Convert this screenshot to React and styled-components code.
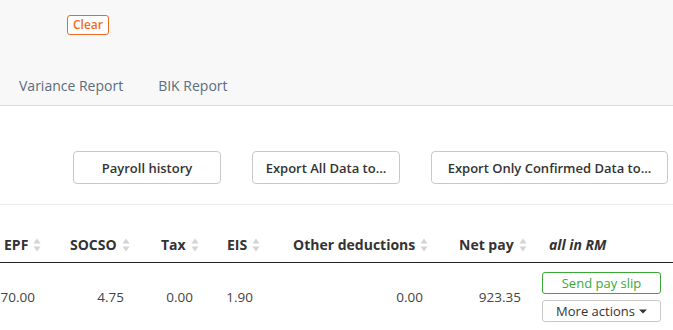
import React from 'react';
import styled, { createGlobalStyle } from 'styled-components';

const GlobalStyle = createGlobalStyle`
  html, body {
    margin: 0;
    padding: 0;
    background: #fff;
    font-family: "Open Sans", "Noto Sans", sans-serif;
    color: #333;
  }
  * { box-sizing: border-box; }
`;

const Page = styled.div`
  width: 673px;
  height: 330px;
  overflow: hidden;
`;

const TopPanel = styled.div`
  height: 106px;
  background: #f8f8f8;
  border-bottom: 1px solid #dcdcdc;
  display: flex;
  flex-direction: column;
`;

const ClearRow = styled.div`
  padding: 12px 0 0 67px;
`;

const ClearButton = styled.button`
  height: 20px;
  padding: 0 5px;
  border: 1px solid #f26a22;
  border-radius: 3px;
  background: #fff;
  color: #f26a22;
  font-family: inherit;
  font-size: 12px;
  font-weight: 600;
  line-height: 17px;
`;

const Tabs = styled.div`
  margin-top: auto;
  display: flex;
  gap: 35px;
  padding: 0 0 9px 19px;
`;

const Tab = styled.div`
  font-size: 14px;
  line-height: 20px;
  color: #5a6d7c;
`;

const ActionBar = styled.div`
  display: flex;
  justify-content: flex-end;
  gap: 31px;
  padding: 45px 5px 20px;
  border-bottom: 1px solid #ececec;
`;

const Button = styled.button`
  width: ${p => p.$w}px;
  height: 33px;
  background: #fff;
  border: 1px solid #c8c8c8;
  border-radius: 4px;
  font-family: inherit;
  font-size: 13px;
  font-weight: 600;
  color: #333;
  padding: 0;
`;

const Grid = styled.div`
  display: grid;
  grid-template-columns: 66px 91px 66px 66px 166px 90px 1fr;
  padding-left: 4px;
`;

const HeadCell = styled.div`
  display: flex;
  align-items: center;
  gap: 5px;
  padding: 30px 0 7px;
  border-bottom: 1px solid #222;
  font-size: 14px;
  font-weight: 700;
  line-height: 20px;
  color: #333;
  font-style: ${p => (p.$italic ? 'italic' : 'normal')};
  margin-left: ${p => (p.$first ? '-4px' : '0')};
  padding-left: ${p => (p.$first ? '4px' : '0')};
`;

const Cell = styled.div`
  display: flex;
  align-items: center;
  justify-content: flex-end;
  padding-right: ${p => p.$pad || 0}px;
  padding-top: 9px;
  font-size: 13.5px;
  color: #444;
`;

const Actions = styled.div`
  display: flex;
  flex-direction: column;
  gap: 6px;
  padding-top: 9px;
  margin-left: -7px;
  width: 119px;
`;

const SmallButton = styled.button`
  height: 22px;
  width: 119px;
  background: #fff;
  border: 1px solid ${p => (p.$green ? '#3aa935' : '#c8c8c8')};
  border-radius: 3px;
  color: ${p => (p.$green ? '#3aa935' : '#333')};
  font-family: inherit;
  font-size: 13px;
  line-height: 18px;
  padding: 0;
  display: flex;
  align-items: center;
  justify-content: center;
  gap: 4px;
`;

const SortIcon = () => (
  <svg width="8" height="14" viewBox="0 0 8 14">
    <path d="M4 0.5 L7.5 5.5 L0.5 5.5 Z" fill="#d4d4d4" />
    <path d="M4 13.5 L7.5 8.5 L0.5 8.5 Z" fill="#d4d4d4" />
  </svg>
);

const Caret = () => (
  <svg width="8" height="5" viewBox="0 0 8 5">
    <path d="M0 0.5 L8 0.5 L4 4.5 Z" fill="#333" />
  </svg>
);

const columns = [
  { label: 'EPF', value: '70.00', pad: 35 },
  { label: 'SOCSO', value: '4.75', pad: 37 },
  { label: 'Tax', value: '0.00', pad: 34 },
  { label: 'EIS', value: '1.90', pad: 40 },
  { label: 'Other deductions', value: '0.00', pad: 36 },
  { label: 'Net pay', value: '923.35', pad: 28 },
];

export default function App() {
  return (
    <Page>
      <GlobalStyle />
      <TopPanel>
        <ClearRow>
          <ClearButton>Clear</ClearButton>
        </ClearRow>
        <Tabs>
          <Tab>Variance Report</Tab>
          <Tab>BIK Report</Tab>
        </Tabs>
      </TopPanel>
      <ActionBar>
        <Button $w={148}>Payroll history</Button>
        <Button $w={148}>Export All Data to...</Button>
        <Button $w={237}>Export Only Confirmed Data to...</Button>
      </ActionBar>
      <Grid>
        {columns.map((c, i) => (
          <HeadCell key={c.label} $first={i === 0}>
            {c.label}
            <SortIcon />
          </HeadCell>
        ))}
        <HeadCell $italic>all in RM</HeadCell>
        {columns.map(c => (
          <Cell key={c.label} $pad={c.pad}>{c.value}</Cell>
        ))}
        <Actions>
          <SmallButton $green>Send pay slip</SmallButton>
          <SmallButton>More actions <Caret /></SmallButton>
        </Actions>
      </Grid>
    </Page>
  );
}
